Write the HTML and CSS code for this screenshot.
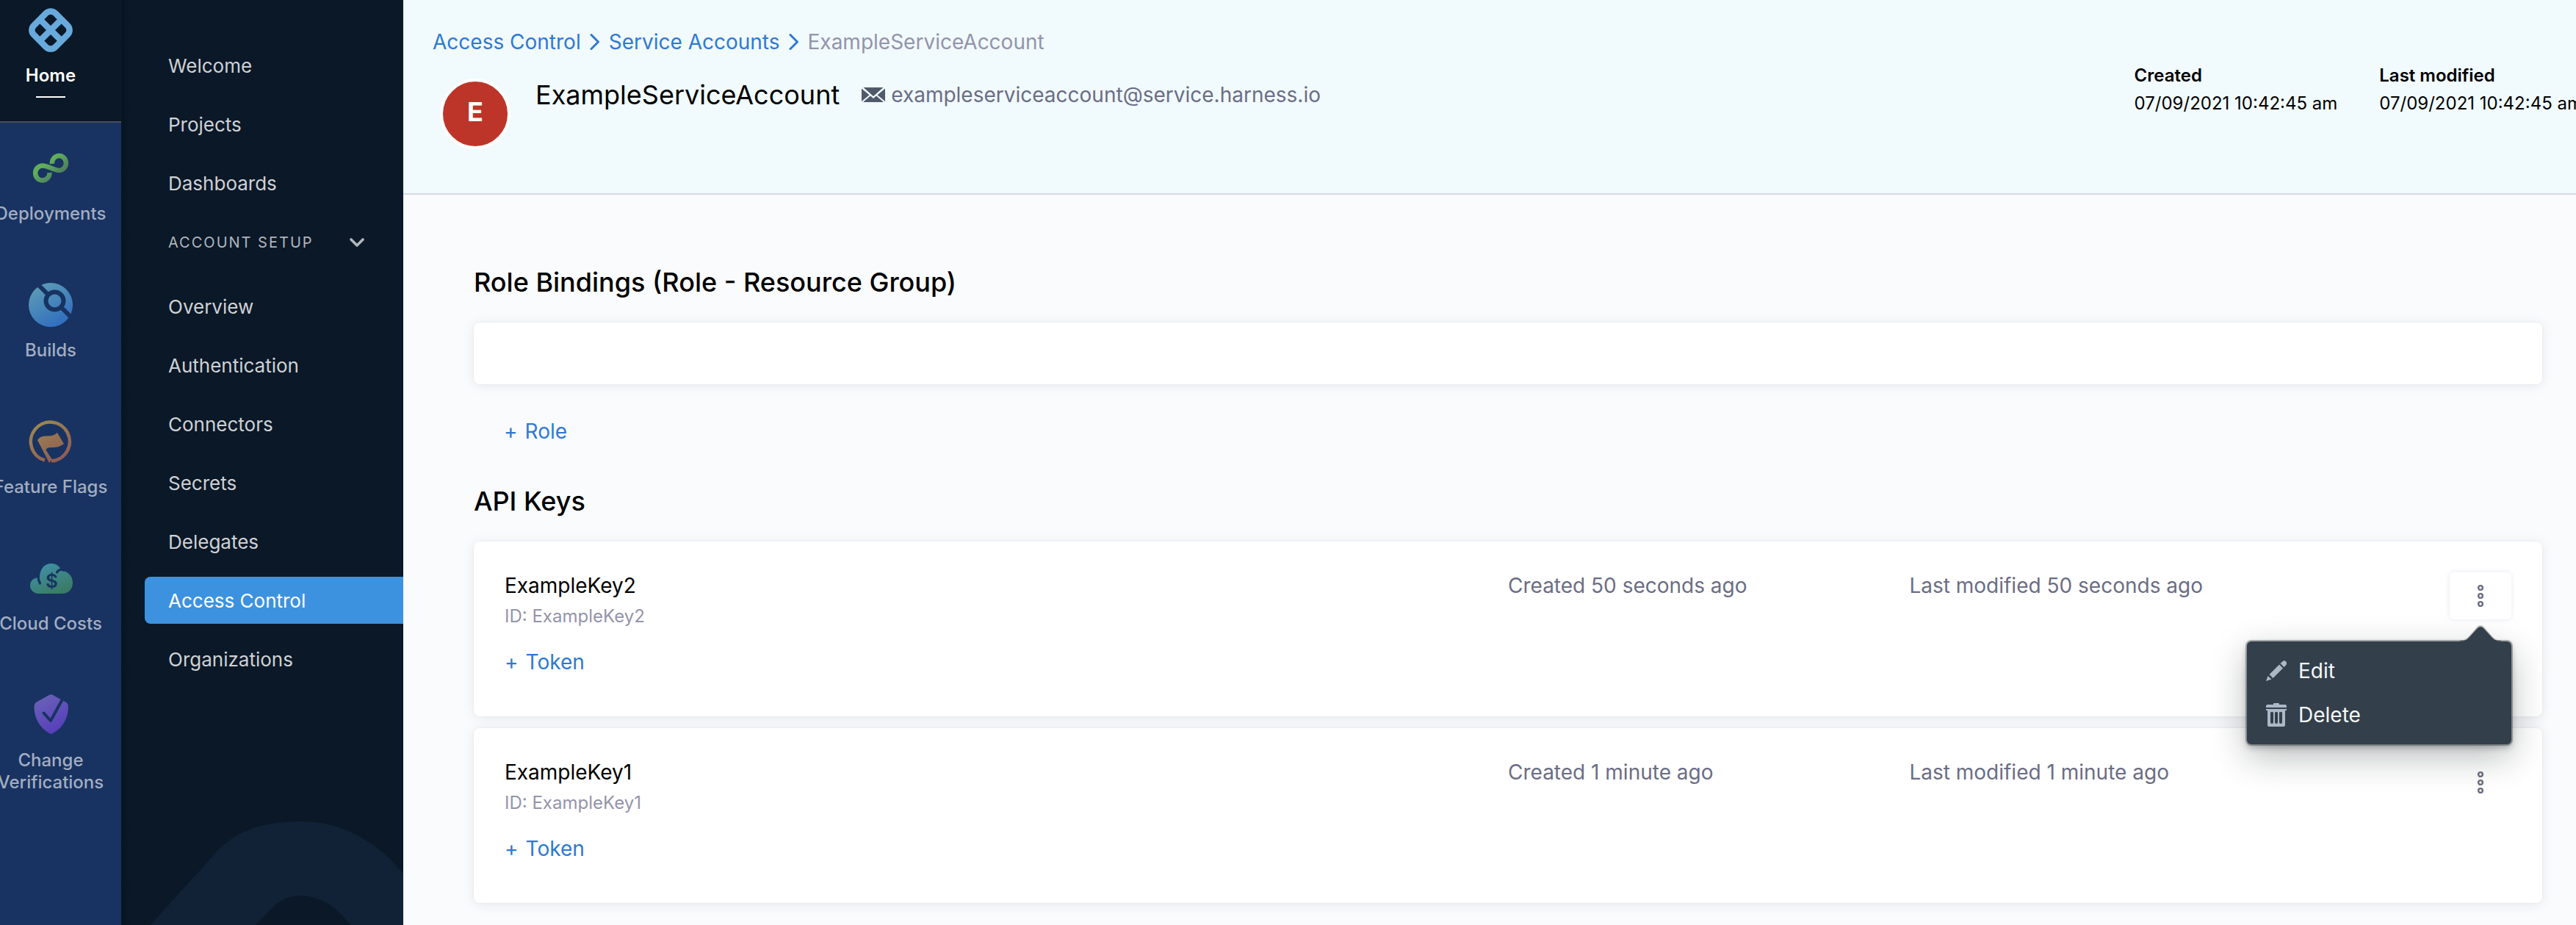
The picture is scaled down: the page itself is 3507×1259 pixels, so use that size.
FILE: index.html
```html
<!DOCTYPE html>
<html lang="en">
<head>
<meta charset="utf-8">
<title>ExampleServiceAccount</title>
<link rel="stylesheet" href="styles.css">
</head>
<body>
<div class="app">
  <nav class="rail" aria-label="Modules">
    <a class="module module-home" href="#">
      <svg class="module-icon" viewBox="0 0 60 60" aria-hidden="true"><g transform="rotate(45 30 30)" fill="none" stroke="#68aadc" stroke-width="8.5"><rect x="9.25" y="9.25" width="41.5" height="41.5" rx="9"/><path d="M30 9v42M9 30h42"/></g></svg>
      <span>Home</span>
    </a>
    <a class="module" href="#">
      <svg class="module-icon" viewBox="0 0 60 60" aria-hidden="true"><defs><linearGradient id="cd" x1="0" y1="0" x2="1" y2="1"><stop offset=".35" stop-color="#60ae59"/><stop offset=".85" stop-color="#4a7562"/></linearGradient></defs><path d="M32 24a9.500 10 0 1 1 9.500 9C35 33 26 26.500 19 26.500A9.700 10 0 1 0 28.500 36" fill="none" stroke="url(#cd)" stroke-width="6.500"/></svg>
      <span>Deployments</span>
    </a>
    <a class="module" href="#">
      <svg class="module-icon" viewBox="0 0 60 60" aria-hidden="true"><defs><linearGradient id="ci" x1=".1" y1="0" x2=".7" y2="1"><stop offset="0" stop-color="#609fb4"/><stop offset="1" stop-color="#2f6cc0"/></linearGradient></defs><circle cx="30" cy="30" r="30" fill="url(#ci)"/><g fill="none" stroke="#183361" stroke-width="6"><circle cx="35.500" cy="24.500" r="12"/><path d="M12 1.500l14 14M45 34l16 16"/></g></svg>
      <span>Builds</span>
    </a>
    <a class="module" href="#">
      <svg class="module-icon" viewBox="0 0 60 60" aria-hidden="true"><defs><linearGradient id="cf" gradientUnits="userSpaceOnUse" x1="12" y1="4" x2="44" y2="56"><stop offset="0" stop-color="#9d8751"/><stop offset="1" stop-color="#8f5b54"/></linearGradient></defs><path d="M22 55.500A26.500 26.500 0 1 1 31 56.500" fill="none" stroke="url(#cf)" stroke-width="4.600"/><path d="M12 28c3-4.500 7-5.500 12-5.500 7 0 10-.5 15-4.500l9 15c-6 4.500-10 5-15 5s-8 0-9.500 3.500L32 54.500 28 59z" fill="url(#cf)"/></svg>
      <span>Feature Flags</span>
    </a>
    <a class="module" href="#">
      <svg class="module-icon" viewBox="0 0 60 60" aria-hidden="true"><defs><linearGradient id="ce" gradientUnits="userSpaceOnUse" x1="22" y1="10" x2="40" y2="52"><stop offset="0" stop-color="#408fa5"/><stop offset="1" stop-color="#3a7b63"/></linearGradient></defs><path d="M15 29C15 18 21 10 31 10c6 0 11 3 14 10 8 0 15 7 15 16s-6 15-15 15H14C7 51 2 46 2 40s4-11 13-11z" fill="url(#ce)"/><path d="M13 28c0 4 1 6 2.500 9M38.500 22c2-3 5-5 9-3" fill="none" stroke="#183361" stroke-width="3.200" stroke-linecap="round"/><text class="cost-sign" x="31.500" y="43">$</text></svg>
      <span>Cloud Costs</span>
    </a>
    <a class="module" href="#">
      <svg class="module-icon" viewBox="0 0 60 60" aria-hidden="true"><defs><linearGradient id="cv" x1=".2" y1="0" x2=".7" y2="1"><stop offset="0" stop-color="#6a63b8"/><stop offset="1" stop-color="#563cba"/></linearGradient></defs><path d="M28 3q2.500-1.500 5 0L51 13q3 2 3 5.500C54 35 46 48 33 55q-2.500 1.500-5 0C15 47 7.500 35 7.500 18.500Q7.500 15 10 13z" fill="url(#cv)"/><path d="M20.500 27.500L30 38 47 7" fill="none" stroke="#183361" stroke-width="4" stroke-linecap="round" stroke-linejoin="round"/></svg>
      <span>Change<br>Verifications</span>
    </a>
  </nav>

  <nav class="menu" aria-label="Account">
    <svg class="menu-art" viewBox="0 0 384 180" aria-hidden="true"><path fill="#112236" fill-rule="evenodd" d="M0 224L132 78C160 50 195 39 246 39c50 0 92 24 120 51l120 134zM142 224l62-66c16-15 28-18 42-18s34 8 48 20l60 64z"/></svg>
    <a class="menu-item" href="#">Welcome</a>
    <a class="menu-item" href="#">Projects</a>
    <a class="menu-item" href="#">Dashboards</a>
    <button class="menu-group" type="button" aria-expanded="true">Account setup
      <svg class="menu-chevron" viewBox="0 0 20 12" aria-hidden="true"><path d="M2 2l8 8 8-8" fill="none" stroke="currentColor" stroke-width="3.600" stroke-linecap="round" stroke-linejoin="round"/></svg>
    </button>
    <a class="menu-item" href="#">Overview</a>
    <a class="menu-item" href="#">Authentication</a>
    <a class="menu-item" href="#">Connectors</a>
    <a class="menu-item" href="#">Secrets</a>
    <a class="menu-item" href="#">Delegates</a>
    <a class="menu-item menu-item-active" href="#" aria-current="page">Access Control</a>
    <a class="menu-item" href="#">Organizations</a>
  </nav>

  <div class="page">
    <header class="page-header">
      <div class="identity">
        <nav class="breadcrumbs" aria-label="Breadcrumb">
          <a class="link" href="#">Access Control</a>
          <svg class="crumb-arrow" viewBox="0 0 14 22" aria-hidden="true"><path d="M2 1.500l9.500 9.500L2 20.500" fill="none" stroke="currentColor" stroke-width="3" stroke-linecap="round" stroke-linejoin="round"/></svg>
          <a class="link" href="#">Service Accounts</a>
          <svg class="crumb-arrow" viewBox="0 0 14 22" aria-hidden="true"><path d="M2 1.500l9.500 9.500L2 20.500" fill="none" stroke="currentColor" stroke-width="3" stroke-linecap="round" stroke-linejoin="round"/></svg>
          <span class="crumb-current">ExampleServiceAccount</span>
        </nav>
        <div class="account">
          <span class="avatar">E</span>
          <h1 class="title">ExampleServiceAccount</h1>
          <span class="email">
            <svg class="email-icon" viewBox="0 0 32 20" aria-hidden="true"><path fill="#4f5a6b" d="M2.500 0h27L16 12zM0 1.500l10.500 8.800L0 19zM32 1.500V19l-10.500-8.700zM12 11.500l4 3.500 4-3.500L30 20H2z"/></svg>
            exampleserviceaccount@service.harness.io
          </span>
        </div>
      </div>
      <dl class="dates">
        <div><dt>Created</dt><dd>07/09/2021 10:42:45 am</dd></div>
        <div><dt>Last modified</dt><dd>07/09/2021 10:42:45 am</dd></div>
      </dl>
    </header>

    <main class="content">
      <h2 class="section-title">Role Bindings (Role - Resource Group)</h2>
      <div class="card card-empty"></div>
      <button class="add add-role" type="button"><span>+</span>Role</button>

      <h2 class="section-title">API Keys</h2>
      <ul class="keys">
        <li class="card key">
          <div class="key-main">
            <h3 class="key-name">ExampleKey2</h3>
            <p class="key-id">ID: ExampleKey2</p>
            <button class="add add-token" type="button"><span>+</span>Token</button>
          </div>
          <p class="key-date">Created 50 seconds ago</p>
          <p class="key-date">Last modified 50 seconds ago</p>
          <div class="key-actions">
            <button class="more more-open" type="button" aria-label="Options" aria-expanded="true">
              <svg class="more-icon" viewBox="0 0 10 32" aria-hidden="true"><g fill="none" stroke="#6b6d85" stroke-width="2.400"><circle cx="5" cy="5" r="2.900"/><circle cx="5" cy="16" r="2.900"/><circle cx="5" cy="27" r="2.900"/></g></svg>
            </button>
            <div class="popover">
              <svg class="popover-arrow" viewBox="0 0 56 24" aria-hidden="true"><path d="M0 22c8 0 10-3 14-7L24 4q4-4 8 0l10 11c4 4 6 7 14 7v2H0z" fill="#333f4b"/><path d="M0 21.500c8 0 10-3 14-7L24 3q4-4 8 0l10 11.500c4 4 6 7 14 7" fill="none" stroke="#000" stroke-opacity=".25" stroke-width="2"/></svg>
              <button class="popover-item" type="button">
                <svg class="popover-icon" viewBox="0 0 28 32" aria-hidden="true"><path fill="#abb8c6" d="M0 30l2.500-7 5 4.500zM4.500 21L18 7.500l5 5L9.500 26zM19.500 6l2.800-2.600c3-3 8 1 4.700 5L24.500 11z"/></svg>
                Edit
              </button>
              <button class="popover-item" type="button">
                <svg class="popover-icon" viewBox="0 0 28 32" aria-hidden="true"><path fill="#abb8c6" fill-rule="evenodd" d="M2 2h8V1q0-1 1-1h6q1 0 1 1v1h8q2 0 2 2v2H0V4q0-2 2-2zM0 8h28v2h-2v20q0 2-2 2H4q-2 0-2-2V10H0zM6 13v13q0 2 2 2t2-2V13q0-1-2-1t-2 1zM12 13v13q0 2 2 2t2-2V13q0-1-2-1t-2 1zM18 13v13q0 2 2 2t2-2V13q0-1-2-1t-2 1z"/></svg>
                Delete
              </button>
            </div>
          </div>
        </li>
        <li class="card key">
          <div class="key-main">
            <h3 class="key-name">ExampleKey1</h3>
            <p class="key-id">ID: ExampleKey1</p>
            <button class="add add-token" type="button"><span>+</span>Token</button>
          </div>
          <p class="key-date">Created 1 minute ago</p>
          <p class="key-date">Last modified 1 minute ago</p>
          <div class="key-actions">
            <button class="more" type="button" aria-label="Options">
              <svg class="more-icon" viewBox="0 0 10 32" aria-hidden="true"><g fill="none" stroke="#6b6d85" stroke-width="2.400"><circle cx="5" cy="5" r="2.900"/><circle cx="5" cy="16" r="2.900"/><circle cx="5" cy="27" r="2.900"/></g></svg>
            </button>
          </div>
        </li>
      </ul>
    </main>
  </div>
</div>
</body>
</html>
```
FILE: styles.css
```css
* { box-sizing: border-box; }

body {
  margin: 0;
  overflow: hidden;
  background: #fafbfd;
  color: #000;
  font-family: Inter, "Liberation Sans", sans-serif;
  font-size: 28px;
  line-height: 36px;
}

h1, h2, h3, p, ul, dl, dd { margin: 0; padding: 0; }
ul { list-style: none; }
a { text-decoration: none; }

button {
  margin: 0;
  padding: 0;
  border: 0;
  background: none;
  color: inherit;
  font: inherit;
}

svg { display: block; flex: none; }

.app {
  display: flex;
  min-height: 100vh;
}

/* Module rail */
.rail {
  flex: none;
  width: 192px;
  margin-left: -27px;
  background: #183361;
}

.module {
  display: flex;
  flex-direction: column;
  align-items: center;
  gap: 17px;
  padding: 32px 0 47px;
  color: #a3adc1;
  font-size: 24px;
  font-weight: 500;
  line-height: 30px;
  text-align: center;
}

.module-home {
  padding: 11px 0 32px;
  border-bottom: 2px solid #474d59;
  background: #0a1828;
  color: #fff;
  font-weight: 600;
}

.module-home::after {
  content: "";
  width: 40px;
  height: 2px;
  margin-top: -4px;
  background: #fff;
}

.module-icon { width: 60px; height: 60px; }

.cost-sign {
  fill: #183361;
  font-size: 26px;
  font-weight: 600;
  text-anchor: middle;
}

/* Account menu */
.menu {
  position: relative;
  display: flex;
  flex: none;
  flex-direction: column;
  gap: 16px;
  width: 384px;
  padding: 57px 0 0 32px;
  background: linear-gradient(90deg, #071422, #0a1828 12px);
}

.menu-art {
  position: absolute;
  bottom: 0;
  left: 0;
  width: 100%;
}

.menu-item, .menu-group {
  position: relative;
  padding: 15px 0 13px 32px;
  color: #cfd1d4;
  font-size: 26px;
}

.menu-item-active {
  border-radius: 8px 0 0 8px;
  background: #3d92df;
  color: #fff;
}

.menu-group {
  display: flex;
  align-items: center;
  justify-content: space-between;
  margin-bottom: 8px;
  padding-right: 53px;
  color: #b2b6bc;
  font-size: 20px;
  letter-spacing: 2px;
  text-transform: uppercase;
}

.menu-chevron { width: 20px; height: 12px; }

/* Page header */
.page {
  flex: 1;
  min-width: 0;
}

.page-header {
  display: flex;
  justify-content: space-between;
  padding: 39px 0 60px 40px;
  border-bottom: 2px solid #d8dbe4;
  background: #f1fafd;
}

.breadcrumbs {
  display: flex;
  align-items: center;
  gap: 12px;
}

.link, .crumb-arrow { color: #2f79d2; }
.crumb-arrow { width: 14px; height: 22px; }
.crumb-current { color: #9494ab; }

.account {
  display: flex;
  margin: 32px 0 0 10px;
}

.avatar {
  width: 96px;
  height: 96px;
  border: 4px solid #fff;
  border-radius: 50%;
  background: #bd3529;
  color: #fff;
  font-size: 36px;
  font-weight: 700;
  line-height: 82px;
  text-align: center;
}

.title {
  margin-left: 34px;
  font-size: 36px;
  font-weight: 400;
  line-height: 44px;
}

.email {
  display: flex;
  align-items: center;
  gap: 8px;
  height: 44px;
  margin-left: 30px;
  color: #6b6d85;
}

.email-icon { width: 32px; height: 20px; }

.dates {
  display: flex;
  gap: 57px;
  margin: 49px -9px 0 0;
  font-size: 24px;
  line-height: 30px;
  white-space: nowrap;
}

.dates dt {
  margin-bottom: 8px;
  font-weight: 600;
}

/* Content */
.content { padding: 97px 46px 30px 96px; }

.section-title {
  margin-bottom: 33px;
  font-size: 36px;
  font-weight: 500;
  line-height: 44px;
}

.card {
  padding: 42px;
  border-radius: 8px;
  background: #fff;
  box-shadow: 0 0 4px rgba(40, 41, 61, .04), 0 2px 16px rgba(96, 97, 112, .12);
}

.add {
  display: flex;
  gap: 10px;
  color: #2f79d2;
}

.add-role { margin: 46px 0 55px 41px; }

.keys {
  display: flex;
  flex-direction: column;
  gap: 16px;
}

.key {
  display: grid;
  grid-template-columns: 50% 20% 1fr auto;
}

.key-name {
  font-size: 28px;
  font-weight: 400;
}

.key-id {
  margin-top: 9px;
  color: #9494ab;
  font-size: 24px;
  line-height: 30px;
}

.key-date { color: #6b6d85; }

.add-token { margin: 29px 0 14px; }

.key-actions {
  position: relative;
  height: 64px;
}

.more {
  display: flex;
  align-items: center;
  justify-content: center;
  width: 84px;
  height: 64px;
  border-radius: 6px;
}

.more-open { box-shadow: 0 0 6px rgba(90, 90, 160, .14); }
.more-icon { width: 10px; height: 32px; }

.popover {
  position: absolute;
  z-index: 1;
  top: 94px;
  right: 0;
  width: 360px;
  padding: 10px 0;
  border-radius: 6px;
  background: #333f4b;
  box-shadow: 0 0 0 2px rgba(16, 22, 26, .3), 0 4px 8px rgba(16, 22, 26, .3), 0 16px 48px rgba(16, 22, 26, .3);
}

.popover-arrow {
  position: absolute;
  top: -22px;
  right: 14px;
  width: 56px;
  height: 24px;
}

.popover-item {
  display: flex;
  align-items: center;
  gap: 16px;
  width: 100%;
  height: 60px;
  padding: 0 26px;
  color: #f5f8fa;
  text-align: left;
}

.popover-icon { width: 28px; height: 32px; }
```
